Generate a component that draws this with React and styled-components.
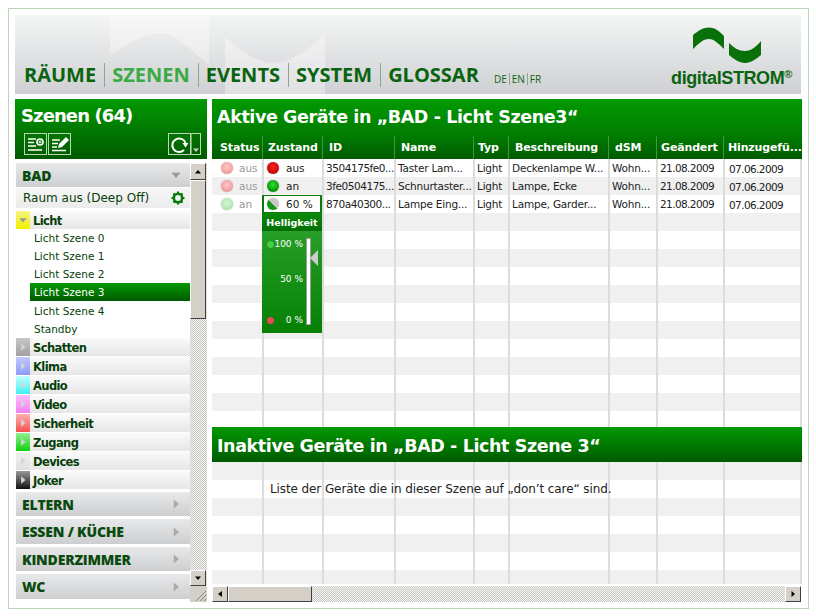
import React from "react";
import styled, { createGlobalStyle } from "styled-components";

const GREEN_BAR = "linear-gradient(#029a02, #005a00)";
const FONT = `"DejaVu Sans", "Liberation Sans", sans-serif`;
const HEAVY = `"Open Sans", "Liberation Sans", sans-serif`;

const Global = createGlobalStyle`
  html, body { margin: 0; padding: 0; background: #fff; }
  * { box-sizing: border-box; }
  body { font-family: ${FONT}; }
`;

const Frame = styled.div`
  width: 801px;
  height: 601px;
  margin: 8px 0 0 8px;
  border: 1px solid #b9d8b8;
  padding: 6px 6px 0 6px;
  display: flex;
  flex-direction: column;
  gap: 5px;
  overflow: hidden;
`;

const Header = styled.header`
  position: relative;
  height: 79px;
  flex: none;
  margin-right: 1px;
  background: linear-gradient(#f4f5f5, #cfd0d3);
  display: flex;
  align-items: flex-end;
  justify-content: space-between;
  padding: 0 9px 6px 9px;
  overflow: hidden;
`;

const Watermark = styled.svg`
  position: absolute;
  left: 80px;
  top: 0;
`;

const Nav = styled.nav`
  position: relative;
  display: flex;
  align-items: flex-end;
  margin-bottom: 1px;
`;

const NavItem = styled.a`
  font-family: ${HEAVY};
  font-size: 20px;
  line-height: 24px;
  font-weight: 700;
  color: ${(p) => (p.$active ? "#3aaa44" : "#0a640f")};
  padding-right: 8px;
  margin-right: 7px;
  border-right: ${(p) => (p.$last ? "none" : "1px solid #8fa58f")};
`;

const Lang = styled.span`
  font-family: ${HEAVY};
  font-size: 10px;
  line-height: 12px;
  color: #0a640f;
  padding: 0 2px;
  border-right: ${(p) => (p.$last ? "none" : "1px solid #8fa58f")};
`;

const LangGroup = styled.div`
  display: flex;
  margin: 0 0 2px -2px;
`;

const Brand = styled.div`
  position: relative;
  display: flex;
  flex-direction: column;
  align-items: center;
  gap: 5px;
`;

const LogoMark = styled.svg`
  margin-right: 10px;
`;

const BrandName = styled.div`
  font-family: "Liberation Sans", sans-serif;
  font-size: 18px;
  line-height: 19px;
  font-weight: bold;
  letter-spacing: -0.4px;
  color: #0a640f;
  sup {
    font-size: 11px;
    line-height: 0;
    vertical-align: 6px;
  }
`;

const Main = styled.div`
  display: flex;
  gap: 5px;
  height: 503px;
`;

const Left = styled.aside`
  width: 192px;
  flex: none;
  display: flex;
  flex-direction: column;
`;

const LeftHead = styled.div`
  height: 60px;
  flex: none;
  background: ${GREEN_BAR};
  padding: 5px 6px 0 6px;
  margin-bottom: 4px;
`;

const LeftTitle = styled.h1`
  margin: 0;
  font-size: 18px;
  line-height: 24px;
  font-weight: bold;
  letter-spacing: -0.9px;
  color: #fff;
`;

const Tools = styled.div`
  display: flex;
  align-items: center;
  gap: 1px;
  margin: 5px 0 0 3px;
`;

const ToolButton = styled.div`
  width: 23px;
  height: 22px;
  border: 1px solid #b8d8b8;
  display: flex;
  align-items: center;
  justify-content: center;
`;

const Refresh = styled(ToolButton)`
  margin-left: auto;
  margin-right: -1px;
`;

const RefreshMenu = styled(ToolButton)`
  width: 10px;
  border-left: 1px solid #6aa86a;
  align-items: flex-end;
`;

const LeftBody = styled.div`
  display: flex;
  flex: 1;
  min-height: 0;
  padding-left: 1px;
`;

const Tree = styled.div`
  width: 174px;
  flex: none;
  display: flex;
  flex-direction: column;
`;

const Room = styled.div`
  height: ${(p) => p.$h || 24}px;
  margin-top: ${(p) => p.$top || 0}px;
  margin-bottom: ${(p) => p.$gap || 0}px;
  flex: none;
  background: linear-gradient(#e8e9ea, #cdcecf);
  padding: 0 8px 0 6px;
  display: flex;
  align-items: center;
  justify-content: space-between;
  font-family: ${HEAVY};
  font-size: 14px;
  font-weight: 800;
  letter-spacing: -0.2px;
  color: #0a4a0f;
`;

const DeepOff = styled.div`
  height: 20px;
  margin: 1px 0 3px;
  background: linear-gradient(#f6f6f6, #ececec);
  padding: 0 5px 0 7px;
  display: flex;
  align-items: center;
  justify-content: space-between;
  font-size: 12px;
  color: #063f0a;
`;

const Group = styled.div`
  height: 18px;
  flex: none;
  margin-bottom: ${(p) => (p.$open ? 0 : "1px")};
  background: linear-gradient(#fafafa, #e6e6e6);
  display: flex;
  align-items: center;
  gap: 3px;
  font-size: 11.5px;
  font-weight: bold;
  letter-spacing: -0.6px;
  line-height: 18px;
  color: #063f0a;
`;

const GroupLabel = styled.span`
  position: relative;
  top: 1px;
`;

const Swatch = styled.div`
  width: 14px;
  height: 18px;
  flex: none;
  background: linear-gradient(${(p) => p.$from}, ${(p) => p.$to});
  display: flex;
  align-items: center;
  justify-content: center;
`;

const Scene = styled.div`
  height: 18px;
  flex: none;
  margin-left: 14px;
  margin-bottom: ${(p) => (p.$active ? "1px" : 0)};
  padding-left: 4px;
  display: flex;
  align-items: center;
  font-size: 10.5px;
  color: ${(p) => (p.$active ? "#fff" : "#063f0a")};
  background: ${(p) => (p.$active ? GREEN_BAR : "#fff")};
`;

const ScrollY = styled.div`
  width: 17px;
  flex: none;
  display: flex;
  flex-direction: column;
  background: repeating-conic-gradient(#c8c8c4 0 25%, #f4f4f2 0 50%) 0 0 / 2px 2px;
`;

const ScrollBtn = styled.div`
  width: 16px;
  height: ${(p) => p.$h || 16}px;
  flex: none;
  background: #d4d0c8;
  border: 1px solid;
  border-color: #fff #404040 #404040 #fff;
  display: flex;
  align-items: center;
  justify-content: center;
`;

const ThumbY = styled.div`
  width: 16px;
  height: 139px;
  flex: none;
  background: #d4d0c8;
  border: 1px solid;
  border-color: #fff #404040 #404040 #fff;
`;

const Spacer = styled.div`
  flex: 1;
`;

const Corner = styled.div`
  width: 17px;
  height: 16px;
  flex: none;
  background: #d4d0c8;
  display: flex;
  align-items: flex-end;
  justify-content: flex-end;
`;

const Right = styled.section`
  flex: 1;
  min-width: 0;
  display: flex;
  flex-direction: column;
`;

const PanelTitle = styled.h2`
  margin: 0;
  height: ${(p) => p.$h}px;
  flex: none;
  background: ${(p) => p.$bg};
  padding: ${(p) => p.$pad};
  font-size: 17.5px;
  line-height: 24px;
  font-weight: bold;
  letter-spacing: -0.4px;
  color: #fff;
  white-space: nowrap;
`;

const COLS = "50px 60px 72px 79px 35px 100px 48px 67px 1fr";

const HeadRow = styled.div`
  display: grid;
  grid-template-columns: ${COLS};
  height: 23px;
  flex: none;
  background: linear-gradient(#017c01, #005a00);
`;

const HeadCell = styled.div`
  display: flex;
  align-items: center;
  padding-left: ${(p) => p.$pl ?? 6}px;
  font-size: 11px;
  font-weight: bold;
  letter-spacing: -0.15px;
  color: #fff;
  white-space: nowrap;
  overflow: hidden;
  border-left: ${(p) => (p.$first ? "none" : "1px solid #3c9a3c")};
`;

const RowsClip = styled.div`
  position: relative;
  height: ${(p) => p.$h}px;
  flex: none;
  overflow: hidden;
`;

const Row = styled.div`
  display: grid;
  grid-template-columns: ${COLS};
  height: 18px;
  background: ${(p) => (p.$odd ? "#f0f0f0" : "#fff")};
`;

const Cell = styled.div`
  display: flex;
  align-items: center;
  gap: 6px;
  padding-left: ${(p) => p.$pl ?? 2}px;
  font-size: 10.5px;
  letter-spacing: -0.2px;
  color: #222;
  white-space: nowrap;
  overflow: hidden;
  border-left: ${(p) => (p.$first ? "none" : "2px solid #dcdcdc")};
  &:last-child {
    border-right: 2px solid #dcdcdc;
  }
`;

const StatusText = styled.span`
  color: #999;
  letter-spacing: 0;
`;

const StateCell = styled(Cell)`
  gap: 7px;
  padding-left: 3px;
  letter-spacing: 0;
  ${(p) => p.$selected && "border: 2px solid #0a7a0a; border-top-width: 1px; border-bottom-width: 1px;"}
`;

const IdText = styled.span`
  letter-spacing: -0.45px;
`;

const DateText = styled.span`
  position: relative;
  left: ${(p) => (p.$low ? "2px" : "0")};
  top: ${(p) => (p.$low ? "1px" : "0")};
  letter-spacing: -0.6px;
`;

const Dot = styled.span`
  width: 12px;
  height: 12px;
  flex: none;
  border-radius: 50%;
  background: radial-gradient(circle at 50% 40%, ${(p) => p.$c1}, ${(p) => p.$c2} 85%);
  box-shadow: 0 0 1px #777;
`;

const HalfDot = styled(Dot)`
  background: linear-gradient(45deg, #119911 0 50%, #c8c8c8 50% 100%);
`;

const Popup = styled.div`
  position: absolute;
  left: 50px;
  top: 54px;
  width: 60px;
  height: 120px;
  background: linear-gradient(#2ea42e, #058005);
`;

const PopupHead = styled.div`
  height: 18px;
  background: linear-gradient(#0b8a0b, #026e02);
  color: #fff;
  font-size: 9.5px;
  font-weight: bold;
  display: flex;
  align-items: center;
  justify-content: center;
`;

const PopupBody = styled.div`
  display: flex;
  justify-content: space-between;
  height: 102px;
  padding: 7px 0 6px 5px;
`;

const Scale = styled.div`
  flex: 1;
  display: flex;
  flex-direction: column;
  justify-content: space-between;
  padding-bottom: 1px;
`;

const ScaleRow = styled.div`
  display: flex;
  align-items: center;
  justify-content: space-between;
  padding-right: 3px;
  margin-bottom: ${(p) => p.$up || 0}px;
  color: #fff;
  font-size: 9px;
  height: 12px;
  white-space: nowrap;
`;

const ScaleDot = styled.span`
  width: 7px;
  height: 7px;
  border-radius: 50%;
  background: ${(p) => p.$c || "transparent"};
  box-shadow: ${(p) => (p.$c ? "0 0 1px #444" : "none")};
`;

const Track = styled.div`
  position: relative;
  width: 5px;
  margin-right: 11px;
  height: 87px;
  background: #fff;
  border: 1px solid #9a9a9a;
`;

const Knob = styled.svg`
  position: absolute;
  left: 2px;
  top: 11px;
`;

const Notice = styled.div`
  position: absolute;
  left: 58px;
  top: 18px;
  height: 18px;
  display: flex;
  align-items: center;
  font-size: 12px;
  letter-spacing: -0.1px;
  color: #222;
  white-space: nowrap;
`;

const ScrollX = styled.div`
  display: flex;
  height: 16px;
  margin: 2px 1px 0 0;
  flex: none;
  background: repeating-conic-gradient(#c8c8c4 0 25%, #f4f4f2 0 50%) 0 0 / 2px 2px;
`;

const ThumbX = styled.div`
  width: 84px;
  flex: none;
  background: #d4d0c8;
  border: 1px solid;
  border-color: #fff #404040 #404040 #fff;
`;

const Tri = ({ d, c = "#000", s = 8 }) => (
  <svg width={s} height={s} viewBox="0 0 8 8">
    <polygon
      points={
        d === "up"
          ? "4,2 7,5.5 1,5.5"
          : d === "down"
            ? "1,2.5 7,2.5 4,6"
            : d === "left"
              ? "6,1 6,7 2,4"
              : "2.5,1 2.5,7 6,4"
      }
      fill={c}
    />
  </svg>
);

const Gear = () => (
  <svg width="14" height="14" viewBox="0 0 14 14">
    <circle cx="7" cy="7" r="4.2" fill="none" stroke="#0a7a0a" strokeWidth="2.6" />
    <path
      d="M7 0.5v2M7 11.5v2M0.5 7h2M11.5 7h2M2.4 2.4l1.4 1.4M10.2 10.2l1.4 1.4M2.4 11.6l1.4-1.4M10.2 3.8l1.4-1.4"
      stroke="#0a7a0a"
      strokeWidth="2"
    />
  </svg>
);

const Logo = () => (
  <LogoMark width="70" height="37" viewBox="0 0 70 37" fill="#0a700a">
    <path d="M1 8C6 4 11 0.5 17 0.5C23 0.5 27 4 32 9V22C27 17 22 12 17 12C11 12 6 17 1 22Z" />
    <path d="M37 16C42 21 47 24 53 24C59 24 64 20 69 14V28C64 32 59 36 53 36C47 36 42 32 37 28Z" />
  </LogoMark>
);

const AddIcon = () => (
  <svg width="18" height="16" viewBox="0 0 18 16" fill="none" stroke="#fff" strokeWidth="1.6">
    <path d="M1 3h8M1 6.5h6M1 10h8M1 14h14" />
    <circle cx="13" cy="6" r="3" />
    <path d="M11.5 6h3M13 4.5v3" strokeWidth="1" />
  </svg>
);

const EditIcon = () => (
  <svg width="18" height="16" viewBox="0 0 18 16" fill="none" stroke="#fff" strokeWidth="1.6">
    <path d="M1 4h8M1 7.5h6M1 11h5M1 14.5h14" />
    <path d="M7 12l1-4 7-7 3 3-7 7z" fill="#fff" stroke="none" />
  </svg>
);

const RefreshIcon = () => (
  <svg width="19" height="19" viewBox="0 0 19 19" fill="none" stroke="#fff" strokeWidth="2">
    <path d="M15.5 8A6.8 6.8 0 1 0 14 15" />
    <polygon points="12.5,8 18.5,8 15.5,12.5" fill="#fff" stroke="none" />
  </svg>
);

const Grip = () => (
  <svg width="14" height="14" viewBox="0 0 14 14" stroke="#888">
    <path d="M13 3L3 13M13 7L7 13M13 11L11 13" />
  </svg>
);

const GROUPS = [
  ["Schatten", "#c8c8c8", "#a0a0a0"],
  ["Klima", "#c0c8ff", "#8c9cf8"],
  ["Audio", "#c0ffff", "#40f0f0"],
  ["Video", "#ffc0ff", "#f080f0"],
  ["Sicherheit", "#ffb0b0", "#f85050"],
  ["Zugang", "#90f090", "#10d010"],
  ["Devices", "#f0f0f0", "#e0e0e0"],
  ["Joker", "#999", "#111"],
];

const COLUMNS = [
  ["Status", 8],
  ["Zustand", 5],
  ["ID", 6],
  ["Name", 6],
  ["Typ", 4],
  ["Beschreibung", 6],
  ["dSM", 6],
  ["Geändert", 4],
  ["Hinzugefü...", 4],
];

const DEVICES = [
  { st: "aus", c: ["#ffc8c8", "#f09090"], state: "aus", dot: ["#ff2020", "#b00000"], id: "3504175fe0...", name: "Taster Lam...", desc: "Deckenlampe W..." },
  { st: "aus", c: ["#ffc8c8", "#f09090"], state: "an", dot: ["#30e030", "#008000"], id: "3fe0504175...", name: "Schnurtaster...", desc: "Lampe, Ecke" },
  { st: "an", c: ["#d8f8d8", "#a8e0a8"], state: "60 %", half: true, id: "870a40300...", name: "Lampe Eing...", desc: "Lampe, Garder..." },
];

function EmptyRows({ from, count }) {
  return Array.from({ length: count }, (_, i) => (
    <Row key={i} $odd={(from + i) % 2 === 1}>
      {COLUMNS.map((c, j) => (
        <Cell key={c[0]} $first={j === 0} />
      ))}
    </Row>
  ));
}

export default function App() {
  return (
    <>
      <Global />
      <Frame>
        <Header>
          <Watermark width="240" height="79" viewBox="0 0 240 79" fill="#fff" fillOpacity="0.35">
            <path d="M15 5Q15 1 20 1H114V50C94 33 80 18 65 18C50 18 35 28 15 40Z" />
            <path d="M130 22C150 40 165 48 178 48C192 48 210 38 230 20V79H130Z" />
          </Watermark>
          <Nav>
            <NavItem>RÄUME</NavItem>
            <NavItem $active>SZENEN</NavItem>
            <NavItem>EVENTS</NavItem>
            <NavItem>SYSTEM</NavItem>
            <NavItem $last>GLOSSAR</NavItem>
            <LangGroup>
              <Lang>DE</Lang>
              <Lang>EN</Lang>
              <Lang $last>FR</Lang>
            </LangGroup>
          </Nav>
          <Brand>
            <Logo />
            <BrandName>
              digitalSTROM<sup>®</sup>
            </BrandName>
          </Brand>
        </Header>
        <Main>
          <Left>
            <LeftHead>
              <LeftTitle>Szenen (64)</LeftTitle>
              <Tools>
                <ToolButton>
                  <AddIcon />
                </ToolButton>
                <ToolButton>
                  <EditIcon />
                </ToolButton>
                <Refresh>
                  <RefreshIcon />
                </Refresh>
                <RefreshMenu>
                  <Tri d="down" c="#ccc" s={8} />
                </RefreshMenu>
              </Tools>
            </LeftHead>
            <LeftBody>
              <Tree>
                <Room>
                  BAD <Tri d="down" c="#999" s={12} />
                </Room>
                <DeepOff>
                  Raum aus (Deep Off) <Gear />
                </DeepOff>
                <Group $open>
                  <Swatch $from="#f8f480" $to="#f0f000">
                    <Tri d="down" c="#999" s={10} />
                  </Swatch>
                  <GroupLabel>Licht</GroupLabel>
                </Group>
                <Scene>Licht Szene 0</Scene>
                <Scene>Licht Szene 1</Scene>
                <Scene>Licht Szene 2</Scene>
                <Scene $active>Licht Szene 3</Scene>
                <Scene>Licht Szene 4</Scene>
                <Scene>Standby</Scene>
                {GROUPS.map(([name, from, to]) => (
                  <Group key={name}>
                    <Swatch $from={from} $to={to}>
                      <Tri d="right" c="#d4d4d4" s={10} />
                    </Swatch>
                    <GroupLabel>{name}</GroupLabel>
                  </Group>
                ))}
                <Room $top={2} $gap={3}>
                  ELTERN <Tri d="right" c="#aaa" s={12} />
                </Room>
                <Room $h={25} $gap={3}>
                  ESSEN / KÜCHE <Tri d="right" c="#aaa" s={12} />
                </Room>
                <Room $gap={3}>
                  KINDERZIMMER <Tri d="right" c="#aaa" s={12} />
                </Room>
                <Room $h={25}>
                  WC <Tri d="right" c="#aaa" s={12} />
                </Room>
              </Tree>
              <ScrollY>
                <ScrollBtn $h={17}>
                  <Tri d="up" />
                </ScrollBtn>
                <ThumbY />
                <Spacer />
                <ScrollBtn>
                  <Tri d="down" />
                </ScrollBtn>
                <Corner>
                  <Grip />
                </Corner>
              </ScrollY>
            </LeftBody>
          </Left>
          <Right>
            <PanelTitle $h={37} $pad="6px 0 0 5px" $bg="linear-gradient(#029a02, #017c01)">
              Aktive Geräte in „BAD - Licht Szene3“
            </PanelTitle>
            <HeadRow>
              {COLUMNS.map(([label, pl], i) => (
                <HeadCell key={label} $first={i === 0} $pl={pl}>
                  {label}
                </HeadCell>
              ))}
            </HeadRow>
            <RowsClip $h={268}>
              {DEVICES.map((d, i) => (
                <Row key={d.id} $odd={i % 2 === 1}>
                  <Cell $first $pl={9}>
                    <Dot $c1={d.c[0]} $c2={d.c[1]} />
                    <StatusText>{d.st}</StatusText>
                  </Cell>
                  <StateCell $selected={d.half}>
                    {d.half ? <HalfDot /> : <Dot $c1={d.dot[0]} $c2={d.dot[1]} />}
                    {d.state}
                  </StateCell>
                  <Cell>
                    <IdText>{d.id}</IdText>
                  </Cell>
                  <Cell>{d.name}</Cell>
                  <Cell>Light</Cell>
                  <Cell>{d.desc}</Cell>
                  <Cell>Wohn...</Cell>
                  <Cell>
                    <DateText>21.08.2009</DateText>
                  </Cell>
                  <Cell>
                    <DateText $low>07.06.2009</DateText>
                  </Cell>
                </Row>
              ))}
              <EmptyRows from={3} count={12} />
              <Popup>
                <PopupHead>Helligkeit</PopupHead>
                <PopupBody>
                  <Scale>
                    <ScaleRow>
                      <ScaleDot $c="#40d040" />
                      100 %
                    </ScaleRow>
                    <ScaleRow $up={6}>
                      <ScaleDot />
                      50 %
                    </ScaleRow>
                    <ScaleRow>
                      <ScaleDot $c="#e05050" />
                      0 %
                    </ScaleRow>
                  </Scale>
                  <Track>
                    <Knob width="9" height="16" viewBox="0 0 9 16">
                      <polygon points="9,0 9,16 1,8" fill="#ccc" />
                    </Knob>
                  </Track>
                </PopupBody>
              </Popup>
            </RowsClip>
            <PanelTitle $h={35} $pad="7px 0 0 5px" $bg={GREEN_BAR}>
              Inaktive Geräte in „BAD - Licht Szene 3“
            </PanelTitle>
            <RowsClip $h={122}>
              <EmptyRows from={1} count={7} />
              <Notice>Liste der Geräte die in dieser Szene auf „don’t care“ sind.</Notice>
            </RowsClip>
            <ScrollX>
              <ScrollBtn>
                <Tri d="left" />
              </ScrollBtn>
              <ThumbX />
              <Spacer />
              <ScrollBtn>
                <Tri d="right" />
              </ScrollBtn>
            </ScrollX>
          </Right>
        </Main>
      </Frame>
    </>
  );
}
